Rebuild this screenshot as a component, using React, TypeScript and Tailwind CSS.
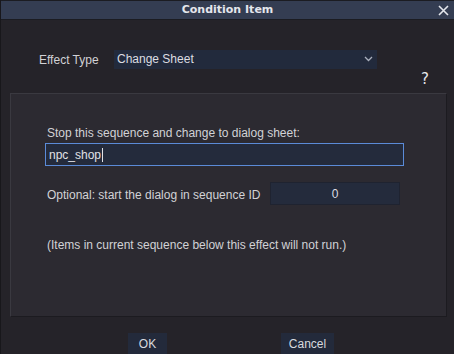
import React from 'react';

const body = { fontFamily: '"Liberation Sans", Arial, sans-serif' };

export default function App() {
  return (
    <div className="w-[454px] h-[354px] overflow-hidden bg-[#252329] text-[#d2d2d6] text-[12px] border-l border-[#18171b] flex flex-col" style={body}>
      {/* title bar */}
      <div className="h-[20px] shrink-0 bg-[#343d52] border-t border-b border-[#1b1c22] flex items-center relative">
        <div className="flex-1 text-center text-[11px] font-bold text-[#e4e6ec]" style={{ fontFamily: '"DejaVu Sans", sans-serif' }}>
          Condition Item
        </div>
        <svg className="absolute right-[5px] top-[4px]" width="11" height="11" viewBox="0 0 11 11">
          <path d="M1 1 L10 10 M10 1 L1 10" stroke="#e4e6ec" strokeWidth="1.6" />
        </svg>
      </div>

      {/* effect type row */}
      <div className="flex items-center mt-[29px] pl-[38px]">
        <span className="w-[75px] pt-[2px]">Effect Type</span>
        <div className="w-[263px] h-[19px] bg-[#222a3c] flex items-center justify-between pl-[3px] pr-[4px]">
          <span className="text-[#dcdde2]">Change Sheet</span>
          <svg width="9" height="6" viewBox="0 0 9 6">
            <path d="M1 1 L4.5 4.5 L8 1" stroke="#aab0bd" strokeWidth="1.3" fill="none" />
          </svg>
        </div>
      </div>

      <div className="h-[24px] flex justify-end pr-[25px] text-[15px] leading-[20px] text-[#e8e8ec]" style={{ fontFamily: '"DejaVu Sans", sans-serif' }}>
        ?
      </div>

      {/* panel */}
      <div className="ml-[9px] w-[437px] h-[224px] bg-[#2c2a31] border-t border-l border-[#3a3940] border-r border-b border-r-[#1c1b20] border-b-[#1c1b20] pl-[34px] pt-[32px] flex flex-col">
        <div className="pl-[2px] leading-[14px]">Stop this sequence and change to dialog sheet:</div>
        <div className="mt-[3px] w-[359px] h-[23px] bg-[#242b3c] border border-[#5b8bd8] flex items-center pl-[3px] text-[#e0e1e6]">
          npc_shop<span className="inline-block w-[1px] h-[14px] bg-[#e0e1e6] ml-[1px]"></span>
        </div>
        <div className="flex items-center mt-[16px]">
          <span className="pl-[2px] w-[225px] pt-[2px]">Optional: start the dialog in sequence ID</span>
          <div className="w-[130px] h-[23px] bg-[#242b3c] border border-[#1f2330] flex items-center justify-center text-[#dcdde2]">
            0
          </div>
        </div>
        <div className="pl-[2px] mt-[33px] leading-[14px]">(Items in current sequence below this effect will not run.)</div>
      </div>

      {/* buttons */}
      <div className="flex mt-[16px]">
        <div className="ml-[127px] w-[39px] h-[21px] bg-[#232a3b] flex items-center justify-center text-[#d8d9de]">OK</div>
        <div className="ml-[114px] w-[53px] h-[21px] bg-[#232a3b] flex items-center justify-center text-[#d8d9de]">Cancel</div>
      </div>
    </div>
  );
}
